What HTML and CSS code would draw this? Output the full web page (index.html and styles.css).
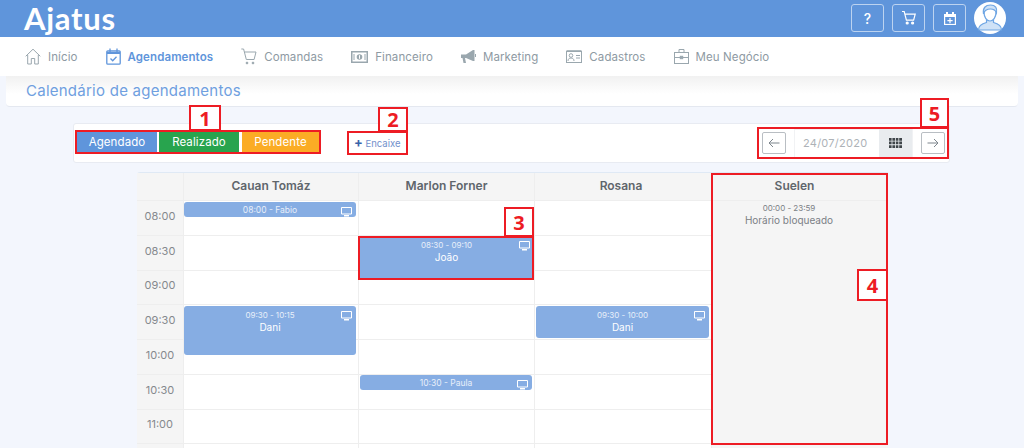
FILE: index.html
```html
<!DOCTYPE html>
<html lang="pt-BR">
<head>
    <meta charset="UTF-8">
    <meta name="viewport" content="width=device-width, initial-scale=1.0">
    <title>Ajatus - Agendamentos</title>
    <link rel="stylesheet" href="styles.css">
</head>
<body>

    <header class="topbar">
        <div class="logo">Ajatus</div>
        <div class="top-actions">
            <a class="top-btn question">?</a>
            <a class="top-btn">
                <svg width="16" height="16" viewBox="0 0 16 16" fill="none" stroke="#fff" stroke-width="1.2"><path d="M1 1.5h2.2l2.2 8.600h7.200l1.600-6H4"/><circle cx="6.200" cy="13" r="1" fill="#fff"/><circle cx="11.600" cy="13" r="1" fill="#fff"/></svg>
            </a>
            <a class="top-btn">
                <svg width="14" height="15" viewBox="0 0 14 15"><path fill="#fff" d="M1 3h2V1h2v2h4V1h2v2h2v11H1z"/><path fill="#5f95db" d="M2.200 6h9.600v6.900H2.200z"/><path fill="#fff" d="M6.400 7h1.200v2h2v1.200h-2v2H6.400v-2h-2V9h2z"/></svg>
            </a>
            <div class="avatar">
                <svg width="30" height="30" viewBox="0 0 30 30" fill="#cfe2f7" stroke="#6fa6e4" stroke-width="1.2"><path d="M3.500 27c0-5 4-6.500 8-7.500v-3h7v3c4 1 8 2.500 8 7.500z"/><path fill="#fff" d="M9 9c0 5 2.500 9 6 9s6-4 6-9-2-6-6-6-6 1-6 6z"/><path d="M8.500 11c-1-6 2-9 7-9s7 3 6 8c-1-3-3-4-6-4s-6 1-7 5z"/></svg>
            </div>
        </div>
    </header>

    <nav class="menu">
        <a class="menu-item">
            <svg width="16" height="17" viewBox="0 0 16 17" fill="none" stroke="#9aa7ae" stroke-width="1"><path d="M.7 8.300 8 1.200l7.300 7.100M2.700 7v9h3.600v-5.500h3.400V16h3.600V7"/></svg>
            Início
        </a>
        <a class="menu-item active">
            <svg width="15" height="17" viewBox="0 0 15 17" fill="none" stroke="#5f95db" stroke-width="1.300"><rect x=".8" y="2.800" width="13.400" height="13.400" rx="1"/><path stroke-width="2.400" d="M1 4.800h13"/><path d="M4 .5v3.500M11 .5v3.500M4.500 10.500l2.200 2.200 3.800-4"/></svg>
            Agendamentos
        </a>
        <a class="menu-item">
            <svg width="16" height="17" viewBox="0 0 16 17" fill="none" stroke="#9aa7ae" stroke-width="1"><path d="M.3 1h2.300l2.700 10.500h7.800l1.900-7.500H3.500"/><circle cx="6" cy="15" r=".9" fill="#9aa7ae"/><circle cx="12" cy="15" r=".9" fill="#9aa7ae"/></svg>
            Comandas
        </a>
        <a class="menu-item">
            <svg width="17" height="12" viewBox="0 0 17 12" fill="none" stroke="#9aa7ae" stroke-width="1.500"><rect x=".75" y=".75" width="15.500" height="10.500"/><circle cx="8.500" cy="6" r="2.800" fill="#9aa7ae" stroke="none"/><path stroke="#fff" stroke-width="1" d="M8.500 4.200v3.600"/><path stroke-width="1" d="M3 3v6M14 3v6"/></svg>
            Financeiro
        </a>
        <a class="menu-item">
            <svg width="15" height="14" viewBox="0 0 15 14"><path fill="#9aa7ae" d="M0 4.500h5L12 0h1.500v11H12L5 8H4l1 5H2.500L1.500 8H0z"/><path fill="none" stroke="#9aa7ae" d="M14.500 4v3"/></svg>
            Marketing
        </a>
        <a class="menu-item">
            <svg width="16" height="13" viewBox="0 0 16 13" fill="none" stroke="#9aa7ae"><rect x=".5" y="1.500" width="15" height="11"/><path d="M.5 1h15" stroke-width="1.600"/><circle cx="5" cy="5.500" r="1.800"/><path d="M2 11c0-2 1.200-3 3-3s3 1 3 3M10 5.500h4M10 8h4"/></svg>
            Cadastros
        </a>
        <a class="menu-item">
            <svg width="15" height="15" viewBox="0 0 15 15" fill="none" stroke="#9aa7ae"><rect x=".5" y="3.500" width="14" height="11"/><path d="M5 3.500v-3h5v3M.5 8.500h14"/><rect x="6.300" y="7.300" width="2.400" height="2.400" fill="#9aa7ae"/></svg>
            Meu Negócio
        </a>
    </nav>

    <div class="title-card">
        <h1>Calendário de agendamentos</h1>
    </div>

    <div class="toolbar">
        <div class="legend">
            <span class="legend-item blue">Agendado</span>
            <span class="legend-item green">Realizado</span>
            <span class="legend-item orange">Pendente</span>
        </div>
        <a class="encaixe"><b>+</b> Encaixe</a>
        <div class="date-nav">
            <a class="arrow">
                <svg width="12" height="10" viewBox="0 0 12 10" fill="none" stroke="#7d858c"><path d="M11.500 5H1M5 1 1 5l4 4"/></svg>
            </a>
            <div class="date-input">
                <span>24/07/2020</span>
                <div class="date-icon">
                    <svg width="13" height="10" viewBox="0 0 13 10" fill="#3f4549"><path d="M0 0h2.600v2.700H0zM3.400 0H6v2.700H3.400zM6.800 0h2.600v2.700H6.800zM10.200 0h2.800v2.700h-2.800zM0 3.600h2.600v2.700H0zM3.400 3.600H6v2.700H3.400zM6.800 3.600h2.600v2.700H6.800zM10.200 3.600h2.800v2.700h-2.800zM0 7.300h2.600V10H0zM3.400 7.300H6V10H3.400zM6.800 7.300h2.600V10H6.800zM10.200 7.300h2.800V10h-2.800z"/></svg>
                </div>
            </div>
            <a class="arrow">
                <svg width="12" height="10" viewBox="0 0 12 10" fill="none" stroke="#7d858c"><path d="M.5 5H11M7 1l4 4-4 4"/></svg>
            </a>
        </div>
    </div>

    <div class="calendar">
        <div class="col times">
            <div class="col-head"></div>
            <div class="slot">08:00</div>
            <div class="slot">08:30</div>
            <div class="slot">09:00</div>
            <div class="slot">09:30</div>
            <div class="slot">10:00</div>
            <div class="slot">10:30</div>
            <div class="slot">11:00</div>
        </div>

        <div class="col first">
            <div class="col-head">Cauan Tomáz</div>
            <div class="slots">
                <div class="slot"></div><div class="slot"></div><div class="slot"></div><div class="slot"></div><div class="slot"></div><div class="slot"></div><div class="slot"></div>
                <div class="event at-0800 small">
                    <span class="ev-time">08:00 - Fabio</span>
                    <svg class="ev-icon" viewBox="0 0 11 10"><path fill="none" stroke="#fff" d="M.5.5h10v6.500H.5z"/><path fill="#fff" d="M3 8h5v1.500H3z"/></svg>
                </div>
                <div class="event at-0930 tall">
                    <span class="ev-time">09:30 - 10:15</span>
                    <span class="ev-name">Dani</span>
                    <svg class="ev-icon" viewBox="0 0 11 10"><path fill="none" stroke="#fff" d="M.5.5h10v6.500H.5z"/><path fill="#fff" d="M3 8h5v1.500H3z"/></svg>
                </div>
            </div>
        </div>

        <div class="col">
            <div class="col-head">Marlon Forner</div>
            <div class="slots">
                <div class="slot"></div><div class="slot"></div><div class="slot"></div><div class="slot"></div><div class="slot"></div><div class="slot"></div><div class="slot"></div>
                <div class="event at-0830 mid">
                    <span class="ev-time">08:30 - 09:10</span>
                    <span class="ev-name">João</span>
                    <svg class="ev-icon" viewBox="0 0 11 10"><path fill="none" stroke="#fff" d="M.5.5h10v6.500H.5z"/><path fill="#fff" d="M3 8h5v1.500H3z"/></svg>
                </div>
                <div class="event at-1030 small">
                    <span class="ev-time">10:30 - Paula</span>
                    <svg class="ev-icon" viewBox="0 0 11 10"><path fill="none" stroke="#fff" d="M.5.5h10v6.500H.5z"/><path fill="#fff" d="M3 8h5v1.500H3z"/></svg>
                </div>
            </div>
        </div>

        <div class="col">
            <div class="col-head rosana">Rosana</div>
            <div class="slots">
                <div class="slot"></div><div class="slot"></div><div class="slot"></div><div class="slot"></div><div class="slot"></div><div class="slot"></div><div class="slot"></div>
                <div class="event at-0930 short">
                    <span class="ev-time">09:30 - 10:00</span>
                    <span class="ev-name">Dani</span>
                    <svg class="ev-icon" viewBox="0 0 11 10"><path fill="none" stroke="#fff" d="M.5.5h10v6.500H.5z"/><path fill="#fff" d="M3 8h5v1.500H3z"/></svg>
                </div>
            </div>
        </div>

        <div class="col blocked">
            <div class="col-head">Suelen</div>
            <div class="blocked-body">
                <span class="ev-time">00:00 - 23:59</span>
                <span class="ev-name">Horário bloqueado</span>
            </div>
        </div>
    </div>

    <!-- marcacoes vermelhas por cima da tela -->
    <div class="mark box-1"></div>
    <div class="mark box-2"></div>
    <div class="mark box-3"></div>
    <div class="mark box-4"></div>
    <div class="mark box-5"></div>
    <div class="mark num num-1">1</div>
    <div class="mark num num-2">2</div>
    <div class="mark num num-3">3</div>
    <div class="mark num num-4">4</div>
    <div class="mark num num-5">5</div>

</body>
</html>
```

FILE: styles.css
```css
html, body {
    margin: 0;
    height: 448px;
    overflow: hidden;
}

body {
    position: relative;
    background: #f3f6fd;
    font-family: Inter, "Open Sans", sans-serif;
    color: #6c757d;
}

/* barra azul */
.topbar {
    height: 37px;
    background: #5f95db;
    display: flex;
    justify-content: space-between;
    padding: 0 18px 0 24px;
}

.logo {
    color: #fff;
    font-family: Lato, sans-serif;
    font-size: 31px;
    font-weight: 700;
    line-height: 37px;
    letter-spacing: .7px;
}

.top-actions {
    display: flex;
    gap: 8px;
    padding-top: 4px;
}

.top-btn {
    width: 31px;
    height: 26px;
    border: 1px solid #bcd3f0;
    border-radius: 3px;
    display: flex;
    align-items: center;
    justify-content: center;
}

.question {
    color: #fff;
    font-size: 14px;
    font-weight: 500;
}

.avatar {
    width: 32px;
    height: 32px;
    margin-top: -2px;
    border-radius: 50%;
    background: #fff;
    display: flex;
    align-items: center;
    justify-content: center;
}

/* menu */
.menu {
    height: 39px;
    background: #fff;
    display: flex;
    align-items: center;
    gap: 28px;
    padding-left: 25px;
}

.menu-item {
    display: flex;
    align-items: center;
    gap: 7px;
    font-size: 11.5px;
    letter-spacing: .1px;
    color: #8e9aa3;
}

.menu-item.active {
    color: #5f95db;
    font-weight: 600;
    letter-spacing: .1px;
}

.title-card {
    height: 30px;
    margin: 0 6px;
    padding-left: 20px;
    background: linear-gradient(#f1f1f1, #fff 60%);
    border-bottom: 1px solid #e4e8f0;
    border-radius: 0 0 4px 4px;
}

h1 {
    margin: 0;
    font-size: 15px;
    font-weight: 400;
    line-height: 29px;
    letter-spacing: .25px;
    color: #6f9fe0;
}

/* filtros e data */
.toolbar {
    width: 877px;
    height: 40px;
    margin: 16px 0 0 73px;
    box-sizing: border-box;
    background: #fff;
    border: 1px solid #e8ebf2;
    border-radius: 3px;
    display: flex;
    align-items: center;
    padding-left: 3px;
}

.legend {
    display: flex;
    gap: 2px;
    margin-bottom: 2px;
}

.legend-item {
    width: 80px;
    height: 20px;
    line-height: 20px;
    text-align: center;
    color: #fff;
    font-size: 11.5px;
    letter-spacing: .1px;
}

.blue { background: #5f95db; }
.green { background: #28a44e; }
.orange { background: #fbac25; margin-left: 1px; width: 77px; }

.encaixe {
    margin-left: 35px;
    margin-bottom: 2px;
    font-size: 9.5px;
    color: #7290cb;
}

.encaixe b {
    color: #3a62a8;
    font-size: 13px;
}

.date-nav {
    margin-left: auto;
    margin-right: 4px;
    display: flex;
    align-items: center;
    gap: 8px;
}

.arrow {
    width: 22px;
    height: 20px;
    border: 1px solid #b9bec3;
    border-radius: 2px;
    display: flex;
    align-items: center;
    justify-content: center;
}

.date-input {
    width: 119px;
    height: 29px;
    box-sizing: border-box;
    border: 1px solid #f1f2f4;
    display: flex;
    align-items: center;
    justify-content: space-between;
    padding-left: 8px;
    font-size: 11px;
    letter-spacing: .25px;
    color: #adb2b7;
}

.date-icon {
    width: 33px;
    height: 29px;
    background: #e9ecef;
    display: flex;
    align-items: center;
    justify-content: center;
}

/* calendario */
.calendar {
    width: 751px;
    margin: 9px 0 0 137px;
    background: #fff;
    border-top: 1px solid #dfe9f5;
    border-radius: 3px 0 0 0;
    display: grid;
    grid-template-columns: 46px 175px 176px 177px 177px;
}

.col {
    border-left: 1px solid #eeeeee;
    box-sizing: border-box;
}

.col-head {
    height: 27px;
    background: #f5f5f5;
    border-bottom: 1px solid #eeeeee;
    text-align: center;
    line-height: 25px;
    font-size: 12px;
    font-weight: 600;
    color: #5f666c;
}

.rosana {
    padding-right: 4px;
}

.blocked .col-head {
    padding-right: 11px;
}

.slots {
    position: relative;
}

.slot {
    height: 33.75px;
    border-bottom: 1px solid #eeeeee;
}

.times {
    background: #f5f5f5;
    border-left: none;
}

.times .slot {
    height: 29.75px;
    padding-bottom: 4px;
    display: flex;
    align-items: center;
    justify-content: center;
    font-size: 11px;
    color: #85898d;
}

.event {
    position: absolute;
    left: 1px;
    right: 2px;
    box-sizing: border-box;
    padding-top: 3px;
    background: #86ade3;
    border-radius: 3px;
    color: #fff;
    text-align: center;
    display: flex;
    flex-direction: column;
}

.first .event {
    left: 0;
}

.event .ev-time {
    color: #e8effa;
}

.ev-time {
    font-size: 8px;
    line-height: 12px;
}

.ev-name {
    font-size: 10px;
    line-height: 12px;
}

.small { height: 15px; }
.short { height: 32px; }
.mid { height: 44px; left: 0; right: 0; }
.tall { height: 49px; }

.small .ev-time {
    font-size: 8.5px;
    line-height: 11px;
}

.at-0800 { top: 1px; }
.at-0830 { top: 35px; }
.at-0930 { top: 105px; }
.at-1030 { top: 174px; }

.ev-icon {
    position: absolute;
    top: 5px;
    right: 4px;
    width: 11px;
    height: 10px;
}

.blocked {
    background: #f5f5f5;
}

.blocked-body {
    height: 248px;
    padding: 1px 22px 0 0;
    display: flex;
    flex-direction: column;
    text-align: center;
    color: #7b8085;
}

/* marcacoes */
.mark {
    position: absolute;
    box-sizing: border-box;
    border: 2px solid #ed1c24;
}

.box-1 { left: 75px; top: 130px; width: 246px; height: 24px; }
.box-2 { left: 347px; top: 131px; width: 61px; height: 24px; }
.box-3 { left: 358px; top: 236px; width: 176px; height: 44px; }
.box-4 { left: 711px; top: 173px; width: 177px; height: 272px; }
.box-5 { left: 757px; top: 127px; width: 192px; height: 32px; }

.num {
    background: #fff;
    color: #ed1c24;
    font-family: "Open Sans", sans-serif;
    font-size: 20px;
    font-weight: 700;
    display: flex;
    align-items: center;
    justify-content: center;
}

.num-1 { left: 189px; top: 105px; width: 32px; height: 26px; }
.num-2 { left: 378px; top: 107px; width: 30px; height: 25px; }
.num-3 { left: 504px; top: 207px; width: 30px; height: 30px; }
.num-4 { left: 857px; top: 269px; width: 31px; height: 32px; }
.num-5 { left: 920px; top: 98px; width: 29px; height: 30px; }
```
